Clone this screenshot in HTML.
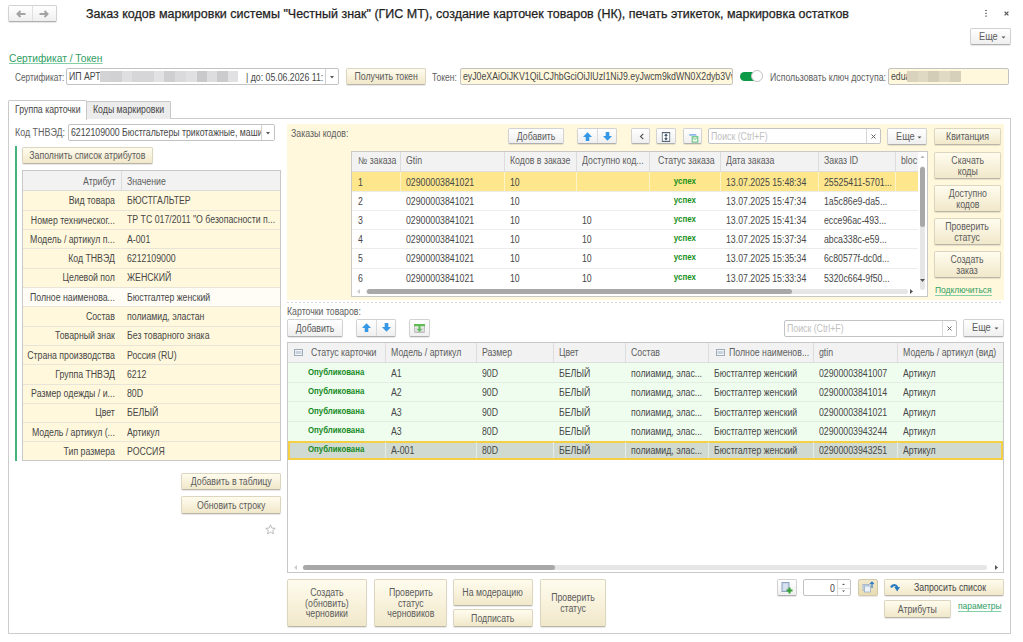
<!DOCTYPE html><html><head><meta charset="utf-8"><style>
*{box-sizing:border-box;margin:0;padding:0}
svg{display:block}
html,body{width:1023px;height:642px;overflow:hidden;background:#fff;font-family:"Liberation Sans",sans-serif;color:#606060}
.a{position:absolute}
.t{position:absolute;font-size:10px;white-space:nowrap;line-height:12px;transform:scaleX(.875);transform-origin:0 50%}
.s{display:inline-block;transform:scaleX(.875);transform-origin:50% 50%;position:relative;top:1px}
.sl{display:inline-block;transform:scaleX(.875);transform-origin:0 50%}
.btn{position:absolute;border:1px solid #d2d2d2;border-bottom-color:#b0b0b0;border-radius:2px;background:linear-gradient(#ffffff,#efefef);box-shadow:0 1px 1px rgba(0,0,0,.10);font-size:10px;color:#5c5c5c;text-align:center;white-space:nowrap;display:flex;align-items:center;justify-content:center;line-height:10.6px}
.yb{border-color:#dcd6c0;border-bottom-color:#b9b5a8;background:linear-gradient(#fffcee,#f1e8ca)}
.inp{position:absolute;border:1px solid #c3c3c3;border-radius:2px;background:#fff;font-size:10px;color:#474747;white-space:nowrap;overflow:hidden;padding-left:2px;line-height:16px}
.link{position:absolute;color:#2f9e63;white-space:nowrap;transform-origin:0 0;transform:scaleX(.92);font-size:9.2px;line-height:9px}
.link span{display:inline-block;border-bottom:1px solid #85cfa6;padding-bottom:0}
.tbl{position:absolute;border:1px solid #c8c8c8;background:#fff;overflow:hidden}
.hd{position:absolute;left:0;top:0;right:0;background:#f2f2f2;border-bottom:1px solid #dedede}
.vl{position:absolute;width:1px;background:#e0e0e0}
.hl{position:absolute;height:1px;background:#ececec}
</style></head><body>
<div class="btn" style="left:8px;top:5px;width:49px;height:17px;"></div>
<div class="a" style="left:32px;top:6px;width:1px;height:15px;background:#e0e0e0"></div>
<svg class="a" style="left:16px;top:10px" width="10" height="8" viewBox="0 0 10 8"><path d="M1.5 4H9.5M4.5 1L1.5 4L4.5 7" stroke="#a3a3a3" stroke-width="2" fill="none"/></svg>
<svg class="a" style="left:39px;top:10px" width="10" height="8" viewBox="0 0 10 8"><path d="M0.5 4H8.5M5.5 1L8.5 4L5.5 7" stroke="#a3a3a3" stroke-width="2" fill="none"/></svg>
<div class="a" style="left:86px;top:6px;font-size:12.5px;line-height:16px;color:#1e1e1e;-webkit-text-stroke:0.25px #1e1e1e;white-space:nowrap">Заказ кодов маркировки системы "Честный знак" (ГИС МТ), создание карточек товаров (НК), печать этикеток, маркировка остатков</div>
<div class="a" style="left:985.2px;top:9.5px;width:1.7px;height:1.7px;background:#707070;box-shadow:0 2.8px 0 #707070,0 5.6px 0 #707070"></div>
<svg class="a" style="left:1003.5px;top:10.5px" width="5" height="5" viewBox="0 0 5 5"><path d="M0.6 0.6L4.4 4.4M4.4 0.6L0.6 4.4" stroke="#5a5a5a" stroke-width="1.3"/></svg>
<div class="btn" style="left:970px;top:28px;width:41px;height:17px;justify-content:flex-start;padding-left:8px;"><span class="sl" style="transform:scaleX(.92);position:relative;top:0.5px">Еще</span><svg width="5" height="3" style="position:absolute;right:4px;top:50%;margin-top:-1px"><path d="M0.5 0.5H4.5L2.5 2.5Z" fill="#555"/></svg></div>
<div class="link" style="left:9px;top:53px;font-size:10.8px;line-height:10px;transform:scaleX(.946)"><span>Сертификат / Токен</span></div>
<div class="t" style="left:15px;top:72px;transform:scaleX(.83)">Сертификат:</div>
<div class="inp" style="left:66px;top:68px;width:273px;height:17px"><span class="sl">ИП АРТ</span></div>
<div class="a" style="left:100px;top:71px;width:10px;height:10.5px;background:#d3d3d5"></div>
<div class="a" style="left:110px;top:71px;width:12px;height:10.5px;background:#d1d1d3"></div>
<div class="a" style="left:122px;top:71px;width:10px;height:10.5px;background:#dfdfe1"></div>
<div class="a" style="left:132px;top:71px;width:22px;height:10.5px;background:#d6d6d8"></div>
<div class="a" style="left:154px;top:71px;width:10px;height:10.5px;background:#e2e2e4"></div>
<div class="a" style="left:164px;top:71px;width:11px;height:10.5px;background:#cfcfd2"></div>
<div class="a" style="left:175px;top:71px;width:11px;height:10.5px;background:#dadadc"></div>
<div class="a" style="left:186px;top:71px;width:11px;height:10.5px;background:#e0e0e2"></div>
<div class="a" style="left:197px;top:71px;width:10px;height:10.5px;background:#c9c9cc"></div>
<div class="a" style="left:207px;top:71px;width:10px;height:10.5px;background:#dddde0"></div>
<div class="a" style="left:217px;top:71px;width:11px;height:10.5px;background:#cbcbce"></div>
<div class="a" style="left:228px;top:71px;width:10px;height:10.5px;background:#e1e1e4"></div>
<div class="t" style="left:246px;top:72px;color:#474747">| до: 05.06.2026 11:</div>
<div class="a" style="left:325px;top:69px;width:1px;height:15px;background:#d0d0d0"></div>
<div class="a" style="left:325px;top:68px;width:14px;height:17px;"></div>
<svg class="a" style="left:329.5px;top:75.5px" width="4" height="3"><path d="M0 0H4L2 2.5Z" fill="#555"/></svg>
<div class="btn yb" style="left:346px;top:68px;width:80px;height:17px;"><span class="s">Получить токен</span></div>
<div class="t" style="left:432px;top:72px;transform:scaleX(.85)">Токен:</div>
<div class="inp" style="left:460px;top:68px;width:273px;height:17px;background:#fff8dc"><span class="sl">eyJ0eXAiOiJKV1QiLCJhbGciOiJIUzI1NiJ9.eyJwcm9kdWN0X2dyb3VwIjoid2Vhcn0</span></div>
<div class="a" style="left:740px;top:72px;width:18px;height:9px;border-radius:4.5px;background:#0c9a47"></div>
<div class="a" style="left:751px;top:70.3px;width:12.2px;height:12.2px;border-radius:50%;background:#fff;border:1px solid #c2c2c2"></div>
<div class="t" style="left:770px;top:72px;">Использовать ключ доступа:</div>
<div class="inp" style="left:888px;top:68px;width:121px;height:17px;background:#fff8dc"><span class="sl">edua</span></div>
<div class="a" style="left:907px;top:71px;width:10.5px;height:10.5px;background:#d9d2bc"></div>
<div class="a" style="left:917.5px;top:71px;width:10.5px;height:10.5px;background:#dfd8c2"></div>
<div class="a" style="left:928px;top:71px;width:11px;height:10.5px;background:#d3ccb6"></div>
<div class="a" style="left:939px;top:71px;width:10.5px;height:10.5px;background:#e0dac5"></div>
<div class="a" style="left:949.5px;top:71px;width:11.5px;height:10.5px;background:#d6cfb9"></div>
<div class="a" style="left:8px;top:118px;width:1003px;height:516px;border:1px solid #cdcdcd;border-radius:0"></div>
<div class="a" style="left:86px;top:101px;width:85px;height:18px;border:1px solid #c8c8c8;border-bottom:none;background:#ececec;border-radius:2px 2px 0 0"></div>
<div class="a" style="left:8px;top:100px;width:79px;height:20px;border:1px solid #c8c8c8;border-bottom:none;background:#fff;border-radius:2px 2px 0 0"></div>
<div class="t" style="left:15px;top:104px;color:#474747">Группа карточки</div>
<div class="t" style="left:93px;top:104px;color:#474747">Коды маркировки</div>
<div class="t" style="left:15px;top:127px;transform:scaleX(.89)">Код ТНВЭД:</div>
<div class="inp" style="left:68px;top:124px;width:207px;height:17px"><span class="sl">6212109000 Бюстгальтеры трикотажные, машинного вязания</span></div>
<div class="a" style="left:261px;top:125px;width:13px;height:15px;background:#fff;border-left:1px solid #d0d0d0"></div>
<svg class="a" style="left:265.5px;top:131.5px" width="4" height="3"><path d="M0 0H4L2 2.5Z" fill="#555"/></svg>
<div class="a" style="left:15px;top:146px;width:2px;height:315px;background:#45b37c"></div>
<div class="btn yb" style="left:22px;top:147px;width:131px;height:17px;"><span class="s">Заполнить список атрибутов</span></div>
<div class="tbl" style="left:22px;top:170px;width:259px;height:291px;background:#fff8dc"></div>
<div class="a" style="left:23px;top:171px;width:257px;height:20px;background:#f2f2f2;border-bottom:1px solid #dcdcdc"></div>
<div class="vl" style="left:121px;top:171px;height:20px;background:#dcdcdc"></div>
<div class="t" style="left:83px;top:175.5px;color:#5e5e5e">Атрибут</div>
<div class="t" style="left:127px;top:175.5px;color:#5e5e5e">Значение</div>
<div class="t" style="left:23px;top:195.2px;width:105px;text-align:right;color:#474747">Вид товара</div>
<div class="t" style="left:127px;top:195.15px;color:#474747">БЮСТГАЛЬТЕР</div>
<div class="hl" style="left:23px;top:209.8px;width:257px;background:#e8e5d8"></div>
<div class="t" style="left:23px;top:214.5px;width:105px;text-align:right;color:#474747">Номер техническог...</div>
<div class="t" style="left:127px;top:214.45000000000002px;color:#474747">ТР ТС 017/2011 "О безопасности п...</div>
<div class="hl" style="left:23px;top:229.1px;width:257px;background:#e8e5d8"></div>
<div class="t" style="left:23px;top:233.8px;width:105px;text-align:right;color:#474747">Модель / артикул п...</div>
<div class="t" style="left:127px;top:233.75px;color:#474747">А-001</div>
<div class="hl" style="left:23px;top:248.4px;width:257px;background:#e8e5d8"></div>
<div class="t" style="left:23px;top:253.1px;width:105px;text-align:right;color:#474747">Код ТНВЭД</div>
<div class="t" style="left:127px;top:253.05px;color:#474747">6212109000</div>
<div class="hl" style="left:23px;top:267.7px;width:257px;background:#e8e5d8"></div>
<div class="t" style="left:23px;top:272.3px;width:105px;text-align:right;color:#474747">Целевой пол</div>
<div class="t" style="left:127px;top:272.34999999999997px;color:#474747">ЖЕНСКИЙ</div>
<div class="a" style="left:23px;top:287.5px;width:257px;height:19.3px;background:#fffdf6"></div>
<div class="hl" style="left:23px;top:287.0px;width:257px;background:#e8e5d8"></div>
<div class="t" style="left:23px;top:291.6px;width:105px;text-align:right;color:#474747">Полное наименова...</div>
<div class="t" style="left:127px;top:291.65px;color:#474747">Бюстгалтер женский</div>
<div class="hl" style="left:23px;top:306.3px;width:257px;background:#e8e5d8"></div>
<div class="t" style="left:23px;top:310.9px;width:105px;text-align:right;color:#474747">Состав</div>
<div class="t" style="left:127px;top:310.95px;color:#474747">полиамид, эластан</div>
<div class="hl" style="left:23px;top:325.6px;width:257px;background:#e8e5d8"></div>
<div class="t" style="left:23px;top:330.2px;width:105px;text-align:right;color:#474747">Товарный знак</div>
<div class="t" style="left:127px;top:330.25px;color:#474747">Без товарного знака</div>
<div class="hl" style="left:23px;top:344.9px;width:257px;background:#e8e5d8"></div>
<div class="t" style="left:23px;top:349.5px;width:105px;text-align:right;color:#474747">Страна производства</div>
<div class="t" style="left:127px;top:349.54999999999995px;color:#474747">Россия (RU)</div>
<div class="hl" style="left:23px;top:364.2px;width:257px;background:#e8e5d8"></div>
<div class="t" style="left:23px;top:368.9px;width:105px;text-align:right;color:#474747">Группа ТНВЭД</div>
<div class="t" style="left:127px;top:368.85px;color:#474747">6212</div>
<div class="hl" style="left:23px;top:383.5px;width:257px;background:#e8e5d8"></div>
<div class="t" style="left:23px;top:388.1px;width:105px;text-align:right;color:#474747">Размер одежды / и...</div>
<div class="t" style="left:127px;top:388.15px;color:#474747">80D</div>
<div class="hl" style="left:23px;top:402.8px;width:257px;background:#e8e5d8"></div>
<div class="t" style="left:23px;top:407.4px;width:105px;text-align:right;color:#474747">Цвет</div>
<div class="t" style="left:127px;top:407.45px;color:#474747">БЕЛЫЙ</div>
<div class="hl" style="left:23px;top:422.1px;width:257px;background:#e8e5d8"></div>
<div class="t" style="left:23px;top:426.8px;width:105px;text-align:right;color:#474747">Модель / артикул (...</div>
<div class="t" style="left:127px;top:426.75px;color:#474747">Артикул</div>
<div class="hl" style="left:23px;top:441.4px;width:257px;background:#e8e5d8"></div>
<div class="t" style="left:23px;top:446.0px;width:105px;text-align:right;color:#474747">Тип размера</div>
<div class="t" style="left:127px;top:446.04999999999995px;color:#474747">РОССИЯ</div>
<div class="btn yb" style="left:181px;top:473px;width:100px;height:17px;"><span class="s">Добавить в таблицу</span></div>
<div class="btn yb" style="left:181px;top:496px;width:100px;height:18px;"><span class="s">Обновить строку</span></div>
<svg class="a" style="left:265px;top:524px" width="11" height="11" viewBox="0 0 11 11"><path d="M5.5 0.8L6.9 4.1L10.3 4.3L7.7 6.5L8.5 9.9L5.5 8.1L2.5 9.9L3.3 6.5L0.7 4.3L4.1 4.1Z" fill="none" stroke="#b5b5b5" stroke-width="0.9"/></svg>
<div class="a" style="left:287px;top:124px;width:717px;height:176px;background:#fff8dc"></div>
<div class="t" style="left:291px;top:128px;">Заказы кодов:</div>
<div class="btn" style="left:508px;top:128px;width:56px;height:16px;"><span class="s">Добавить</span></div>
<div class="btn" style="left:577px;top:128px;width:40px;height:16px;"></div>
<div class="a" style="left:597px;top:129px;width:1px;height:14px;background:#dadada"></div>
<div class="a" style="left:583px;top:131.5px"><svg width="9" height="9" viewBox="0 0 9 9"><path d="M4.5 0.2L9 5H6.3V9H2.7V5H0Z" fill="#3598e6"/></svg></div>
<div class="a" style="left:602.5px;top:131.5px"><svg width="9" height="9" viewBox="0 0 9 9"><path d="M4.5 8.8L9 4H6.3V0H2.7V4H0Z" fill="#3598e6"/></svg></div>
<div class="btn" style="left:631px;top:128px;width:19px;height:16px;"></div>
<svg class="a" style="left:638.5px;top:133px" width="6" height="7" viewBox="0 0 6 7"><path d="M4.3 0.8L1.5 3.5L4.3 6.2" stroke="#505050" stroke-width="1.1" fill="none"/></svg>
<div class="btn" style="left:656px;top:128px;width:20px;height:16px;"><span class="s"><svg width="10" height="10" viewBox="0 0 10 10"><rect x="0.6" y="0.6" width="8.8" height="8.8" fill="#fff" stroke="#56687a" stroke-width="1.2"/><path d="M5 1.6L7.2 3.8H2.8ZM5 8.4L7.2 6.2H2.8Z" fill="#34495e"/><path d="M5 3V7" stroke="#34495e" stroke-width="0.9"/></svg></span></div>
<div class="btn" style="left:683px;top:128px;width:19px;height:16px"></div>
<svg class="a" style="left:689px;top:133.5px" width="10" height="9" viewBox="0 0 10 9"><rect x="0" y="0" width="7.5" height="1.8" rx="0.9" fill="#8fb8ea"/><rect x="3.2" y="2.7" width="5.6" height="5.4" fill="#f0faf2" stroke="#5cbf76" stroke-width="1"/><path d="M3.6 3.3L6 5.5L8.4 3.3" stroke="#5cbf76" fill="none" stroke-width="0.9"/></svg>
<div class="inp" style="left:708px;top:128px;width:173px;height:16px;color:#c0c0c0"><span class="sl">Поиск (Ctrl+F)</span></div>
<div class="a" style="left:866px;top:129px;width:1px;height:14px;background:#d8d8d8"></div>
<svg class="a" style="left:871px;top:134px" width="5" height="5"><path d="M0.5 0.5L4.5 4.5M4.5 0.5L0.5 4.5" stroke="#666" stroke-width="1"/></svg>
<div class="btn" style="left:887px;top:128px;width:40px;height:17px;justify-content:flex-start;padding-left:8px;"><span class="sl" style="transform:scaleX(.92);position:relative;top:0.5px">Еще</span><svg width="5" height="3" style="position:absolute;right:4px;top:50%;margin-top:-1px"><path d="M0.5 0.5H4.5L2.5 2.5Z" fill="#555"/></svg></div>
<div class="btn yb" style="left:934px;top:128px;width:67px;height:17px;"><span class="s">Квитанция</span></div>
<div class="btn yb" style="left:934px;top:152px;width:67px;height:27px;"><span class="s">Скачать<br>коды</span></div>
<div class="btn yb" style="left:934px;top:185px;width:67px;height:27px;"><span class="s">Доступно<br>кодов</span></div>
<div class="btn yb" style="left:934px;top:218px;width:67px;height:27px;"><span class="s">Проверить<br>статус</span></div>
<div class="btn yb" style="left:934px;top:251px;width:67px;height:27px;"><span class="s">Создать<br>заказ</span></div>
<div class="link" style="left:935px;top:286px"><span>Подключиться</span></div>
<div class="tbl" style="left:351px;top:151px;width:577px;height:146px"></div>
<div class="a" style="left:352px;top:152px;width:566px;height:20px;background:#f2f2f2;border-bottom:1px solid #dedede"></div>
<div class="vl" style="left:400px;top:152px;height:20px;background:#dcdcdc"></div>
<div class="vl" style="left:504px;top:152px;height:20px;background:#dcdcdc"></div>
<div class="vl" style="left:576px;top:152px;height:20px;background:#dcdcdc"></div>
<div class="vl" style="left:649px;top:152px;height:20px;background:#dcdcdc"></div>
<div class="vl" style="left:720px;top:152px;height:20px;background:#dcdcdc"></div>
<div class="vl" style="left:818px;top:152px;height:20px;background:#dcdcdc"></div>
<div class="vl" style="left:895px;top:152px;height:20px;background:#dcdcdc"></div>
<div class="t" style="left:358px;top:155.2px;color:#5e5e5e">№ заказа</div>
<div class="t" style="left:406px;top:155.2px;color:#5e5e5e">Gtin</div>
<div class="t" style="left:510px;top:155.2px;color:#5e5e5e">Кодов в заказе</div>
<div class="t" style="left:582px;top:155.2px;color:#5e5e5e">Доступно код...</div>
<div class="t" style="left:658px;top:155.2px;color:#5e5e5e">Статус заказа</div>
<div class="t" style="left:726px;top:155.2px;color:#5e5e5e">Дата заказа</div>
<div class="t" style="left:824px;top:155.2px;color:#5e5e5e">Заказ ID</div>
<div class="t" style="left:901px;top:155.2px;color:#5e5e5e">bloc</div>
<div class="a" style="left:352px;top:172.0px;width:566px;height:19.2px;background:#fde68c"></div>
<div class="vl" style="left:400px;top:172.0px;height:19.2px;background:#fff3c8"></div>
<div class="vl" style="left:504px;top:172.0px;height:19.2px;background:#fff3c8"></div>
<div class="vl" style="left:576px;top:172.0px;height:19.2px;background:#fff3c8"></div>
<div class="vl" style="left:649px;top:172.0px;height:19.2px;background:#fff3c8"></div>
<div class="vl" style="left:720px;top:172.0px;height:19.2px;background:#fff3c8"></div>
<div class="vl" style="left:818px;top:172.0px;height:19.2px;background:#fff3c8"></div>
<div class="vl" style="left:895px;top:172.0px;height:19.2px;background:#fff3c8"></div>
<div class="t" style="left:358px;top:176.6px;color:#474747">1</div>
<div class="t" style="left:406px;top:176.6px;color:#474747">02900003841021</div>
<div class="t" style="left:510px;top:176.6px;color:#474747">10</div>
<div class="t" style="left:582px;top:176.6px;color:#474747"></div>
<div class="a" style="left:650px;top:175.6px;width:70px;text-align:center;font-size:8.5px;font-weight:bold;color:#16901a;line-height:11px"><span class="s" style="transform:scaleX(.93);top:0">успех</span></div>
<div class="t" style="left:726px;top:176.6px;color:#474747">13.07.2025 15:48:34</div>
<div class="t" style="left:824px;top:176.6px;color:#474747">25525411-5701...</div>
<div class="hl" style="left:352px;top:190.7px;width:566px;background:#ececec"></div>
<div class="t" style="left:358px;top:195.79999999999998px;color:#474747">2</div>
<div class="t" style="left:406px;top:195.79999999999998px;color:#474747">02900003841021</div>
<div class="t" style="left:510px;top:195.79999999999998px;color:#474747">10</div>
<div class="t" style="left:582px;top:195.79999999999998px;color:#474747"></div>
<div class="a" style="left:650px;top:194.8px;width:70px;text-align:center;font-size:8.5px;font-weight:bold;color:#16901a;line-height:11px"><span class="s" style="transform:scaleX(.93);top:0">успех</span></div>
<div class="t" style="left:726px;top:195.79999999999998px;color:#474747">13.07.2025 15:47:34</div>
<div class="t" style="left:824px;top:195.79999999999998px;color:#474747">1a5c86e9-da5...</div>
<div class="hl" style="left:352px;top:209.9px;width:566px;background:#ececec"></div>
<div class="t" style="left:358px;top:215.0px;color:#474747">3</div>
<div class="t" style="left:406px;top:215.0px;color:#474747">02900003841021</div>
<div class="t" style="left:510px;top:215.0px;color:#474747">10</div>
<div class="t" style="left:582px;top:215.0px;color:#474747">10</div>
<div class="a" style="left:650px;top:214.0px;width:70px;text-align:center;font-size:8.5px;font-weight:bold;color:#16901a;line-height:11px"><span class="s" style="transform:scaleX(.93);top:0">успех</span></div>
<div class="t" style="left:726px;top:215.0px;color:#474747">13.07.2025 15:41:34</div>
<div class="t" style="left:824px;top:215.0px;color:#474747">ecce96ac-493...</div>
<div class="hl" style="left:352px;top:229.1px;width:566px;background:#ececec"></div>
<div class="t" style="left:358px;top:234.2px;color:#474747">4</div>
<div class="t" style="left:406px;top:234.2px;color:#474747">02900003841021</div>
<div class="t" style="left:510px;top:234.2px;color:#474747">10</div>
<div class="t" style="left:582px;top:234.2px;color:#474747">10</div>
<div class="a" style="left:650px;top:233.2px;width:70px;text-align:center;font-size:8.5px;font-weight:bold;color:#16901a;line-height:11px"><span class="s" style="transform:scaleX(.93);top:0">успех</span></div>
<div class="t" style="left:726px;top:234.2px;color:#474747">13.07.2025 15:37:34</div>
<div class="t" style="left:824px;top:234.2px;color:#474747">abca338c-e59...</div>
<div class="hl" style="left:352px;top:248.3px;width:566px;background:#ececec"></div>
<div class="t" style="left:358px;top:253.40000000000003px;color:#474747">5</div>
<div class="t" style="left:406px;top:253.40000000000003px;color:#474747">02900003841021</div>
<div class="t" style="left:510px;top:253.40000000000003px;color:#474747">10</div>
<div class="t" style="left:582px;top:253.40000000000003px;color:#474747">10</div>
<div class="a" style="left:650px;top:252.4px;width:70px;text-align:center;font-size:8.5px;font-weight:bold;color:#16901a;line-height:11px"><span class="s" style="transform:scaleX(.93);top:0">успех</span></div>
<div class="t" style="left:726px;top:253.40000000000003px;color:#474747">13.07.2025 15:35:34</div>
<div class="t" style="left:824px;top:253.40000000000003px;color:#474747">6c80577f-dc0d...</div>
<div class="hl" style="left:352px;top:267.5px;width:566px;background:#ececec"></div>
<div class="t" style="left:358px;top:272.6px;color:#474747">6</div>
<div class="t" style="left:406px;top:272.6px;color:#474747">02900003841021</div>
<div class="t" style="left:510px;top:272.6px;color:#474747">10</div>
<div class="t" style="left:582px;top:272.6px;color:#474747">10</div>
<div class="a" style="left:650px;top:271.6px;width:70px;text-align:center;font-size:8.5px;font-weight:bold;color:#16901a;line-height:11px"><span class="s" style="transform:scaleX(.93);top:0">успех</span></div>
<div class="t" style="left:726px;top:272.6px;color:#474747">13.07.2025 15:33:34</div>
<div class="t" style="left:824px;top:272.6px;color:#474747">5320c664-9f50...</div>
<div class="a" style="left:918px;top:152px;width:9px;height:144px;background:#fff"></div>
<div class="a" style="left:920px;top:166px;width:5px;height:124px;border-radius:3px;background:#e6e6e6"></div>
<div class="a" style="left:920px;top:167px;width:5px;height:60px;border-radius:3px;background:#a8a8a8"></div>
<svg class="a" style="left:920px;top:155px" width="5" height="3"><path d="M0.5 3H4.5L2.5 0.5Z" fill="#b5b5b5"/></svg>
<svg class="a" style="left:920px;top:279px" width="5" height="3"><path d="M0 0H5L2.5 3Z" fill="#555"/></svg>
<div class="a" style="left:352px;top:286px;width:566px;height:10px;background:#fff"></div>
<div class="a" style="left:366px;top:289px;width:542px;height:5px;border-radius:3px;background:#e6e6e6"></div>
<div class="a" style="left:367px;top:289px;width:425px;height:5px;border-radius:3px;background:#a8a8a8"></div>
<svg class="a" style="left:357px;top:289px" width="3" height="5"><path d="M3 0V5L0 2.5Z" fill="#ccc"/></svg>
<svg class="a" style="left:910px;top:289px" width="3" height="5"><path d="M0 0V5L3 2.5Z" fill="#555"/></svg>
<div class="a" style="left:287px;top:302px;width:716px;height:1px;background:repeating-linear-gradient(90deg,#d6d6d6 0 2px,transparent 2px 4px)"></div>
<div class="t" style="left:287px;top:306px;">Карточки товаров:</div>
<div class="btn" style="left:287px;top:319px;width:56px;height:18px;"><span class="s">Добавить</span></div>
<div class="btn" style="left:356px;top:319px;width:40px;height:18px;"></div>
<div class="a" style="left:376px;top:320px;width:1px;height:16px;background:#dadada"></div>
<div class="a" style="left:362px;top:323px"><svg width="9" height="9" viewBox="0 0 9 9"><path d="M4.5 0.2L9 5H6.3V9H2.7V5H0Z" fill="#3598e6"/></svg></div>
<div class="a" style="left:382px;top:323px"><svg width="9" height="9" viewBox="0 0 9 9"><path d="M4.5 8.8L9 4H6.3V0H2.7V4H0Z" fill="#3598e6"/></svg></div>
<div class="btn" style="left:409px;top:319px;width:21px;height:18px;"></div>
<svg class="a" style="left:414px;top:324px" width="11" height="9" viewBox="0 0 11 9"><rect x="0.4" y="0.4" width="10.2" height="8.2" rx="0.8" fill="#f6f6f6" stroke="#a9a9a9" stroke-width="0.8"/><rect x="0" y="0" width="11" height="2.3" fill="#62bb52"/><path d="M1 4.2H10M1 5.9H10M1 7.5H10" stroke="#bdbdbd" stroke-width="0.7"/><path d="M5.5 2V5.5" stroke="#5db85a" stroke-width="2"/><path d="M2.8 5L8.2 5L5.5 8Z" fill="#5db85a"/></svg>
<div class="inp" style="left:784px;top:320px;width:173px;height:17px;color:#c0c0c0"><span class="sl">Поиск (Ctrl+F)</span></div>
<div class="a" style="left:942px;top:321px;width:1px;height:15px;background:#d8d8d8"></div>
<svg class="a" style="left:947px;top:326px" width="5" height="5"><path d="M0.5 0.5L4.5 4.5M4.5 0.5L0.5 4.5" stroke="#666" stroke-width="1"/></svg>
<div class="btn" style="left:963px;top:319px;width:41px;height:18px;justify-content:flex-start;padding-left:8px;"><span class="sl" style="transform:scaleX(.92);position:relative;top:0.5px">Еще</span><svg width="5" height="3" style="position:absolute;right:4px;top:50%;margin-top:-1px"><path d="M0.5 0.5H4.5L2.5 2.5Z" fill="#555"/></svg></div>
<div class="tbl" style="left:287px;top:342px;width:717px;height:231px"></div>
<div class="a" style="left:288px;top:343px;width:715px;height:20px;background:#f2f2f2;border-bottom:1px solid #dedede"></div>
<div class="vl" style="left:385px;top:343px;height:20px;background:#dcdcdc"></div>
<div class="vl" style="left:476px;top:343px;height:20px;background:#dcdcdc"></div>
<div class="vl" style="left:553px;top:343px;height:20px;background:#dcdcdc"></div>
<div class="vl" style="left:625px;top:343px;height:20px;background:#dcdcdc"></div>
<div class="vl" style="left:708px;top:343px;height:20px;background:#dcdcdc"></div>
<div class="vl" style="left:813px;top:343px;height:20px;background:#dcdcdc"></div>
<div class="vl" style="left:897px;top:343px;height:20px;background:#dcdcdc"></div>
<div class="a" style="left:294px;top:349px"><svg width="9" height="7" viewBox="0 0 9 7"><rect x="0.5" y="0.5" width="8" height="6" fill="#f4f6f9" stroke="#9eabb9"/><rect x="1.5" y="2" width="6" height="3" fill="#c9d3de"/></svg></div>
<div class="a" style="left:716px;top:349px"><svg width="9" height="7" viewBox="0 0 9 7"><rect x="0.5" y="0.5" width="8" height="6" fill="#f4f6f9" stroke="#9eabb9"/><rect x="1.5" y="2" width="6" height="3" fill="#c9d3de"/></svg></div>
<div class="t" style="left:311px;top:347.2px;color:#5e5e5e">Статус карточки</div>
<div class="t" style="left:391px;top:347.2px;color:#5e5e5e">Модель / артикул</div>
<div class="t" style="left:482px;top:347.2px;color:#5e5e5e">Размер</div>
<div class="t" style="left:559px;top:347.2px;color:#5e5e5e">Цвет</div>
<div class="t" style="left:631px;top:347.2px;color:#5e5e5e">Состав</div>
<div class="t" style="left:729px;top:347.2px;color:#5e5e5e">Полное наименов...</div>
<div class="t" style="left:819px;top:347.2px;color:#5e5e5e">gtin</div>
<div class="t" style="left:903px;top:347.2px;color:#5e5e5e">Модель / артикул (вид)</div>
<div class="a" style="left:288px;top:363.0px;width:715px;height:19.4px;background:#effdef"></div>
<div class="a" style="left:308px;top:366.7px;font-size:8.5px;font-weight:bold;color:#178a1f;line-height:11px;white-space:nowrap"><span class="sl" style="transform:scaleX(.92)">Опубликована</span></div>
<div class="t" style="left:391px;top:367.7px;color:#474747">A1</div>
<div class="t" style="left:482px;top:367.7px;color:#474747">90D</div>
<div class="t" style="left:559px;top:367.7px;color:#474747">БЕЛЫЙ</div>
<div class="t" style="left:631px;top:367.7px;color:#474747">полиамид, элас...</div>
<div class="t" style="left:714px;top:367.7px;color:#474747">Бюстгалтер женский</div>
<div class="t" style="left:819px;top:367.7px;color:#474747">02900003841007</div>
<div class="t" style="left:903px;top:367.7px;color:#474747">Артикул</div>
<div class="a" style="left:288px;top:382.4px;width:715px;height:19.4px;background:#effdef"></div>
<div class="hl" style="left:288px;top:381.9px;width:715px;background:#e3eee3"></div>
<div class="a" style="left:308px;top:386.1px;font-size:8.5px;font-weight:bold;color:#178a1f;line-height:11px;white-space:nowrap"><span class="sl" style="transform:scaleX(.92)">Опубликована</span></div>
<div class="t" style="left:391px;top:387.09999999999997px;color:#474747">A2</div>
<div class="t" style="left:482px;top:387.09999999999997px;color:#474747">90D</div>
<div class="t" style="left:559px;top:387.09999999999997px;color:#474747">БЕЛЫЙ</div>
<div class="t" style="left:631px;top:387.09999999999997px;color:#474747">полиамид, элас...</div>
<div class="t" style="left:714px;top:387.09999999999997px;color:#474747">Бюстгалтер женский</div>
<div class="t" style="left:819px;top:387.09999999999997px;color:#474747">02900003841014</div>
<div class="t" style="left:903px;top:387.09999999999997px;color:#474747">Артикул</div>
<div class="a" style="left:288px;top:401.8px;width:715px;height:19.4px;background:#effdef"></div>
<div class="hl" style="left:288px;top:401.3px;width:715px;background:#e3eee3"></div>
<div class="a" style="left:308px;top:405.5px;font-size:8.5px;font-weight:bold;color:#178a1f;line-height:11px;white-space:nowrap"><span class="sl" style="transform:scaleX(.92)">Опубликована</span></div>
<div class="t" style="left:391px;top:406.5px;color:#474747">A3</div>
<div class="t" style="left:482px;top:406.5px;color:#474747">90D</div>
<div class="t" style="left:559px;top:406.5px;color:#474747">БЕЛЫЙ</div>
<div class="t" style="left:631px;top:406.5px;color:#474747">полиамид, элас...</div>
<div class="t" style="left:714px;top:406.5px;color:#474747">Бюстгалтер женский</div>
<div class="t" style="left:819px;top:406.5px;color:#474747">02900003841021</div>
<div class="t" style="left:903px;top:406.5px;color:#474747">Артикул</div>
<div class="a" style="left:288px;top:421.2px;width:715px;height:19.4px;background:#effdef"></div>
<div class="hl" style="left:288px;top:420.7px;width:715px;background:#e3eee3"></div>
<div class="a" style="left:308px;top:424.9px;font-size:8.5px;font-weight:bold;color:#178a1f;line-height:11px;white-space:nowrap"><span class="sl" style="transform:scaleX(.92)">Опубликована</span></div>
<div class="t" style="left:391px;top:425.9px;color:#474747">A3</div>
<div class="t" style="left:482px;top:425.9px;color:#474747">80D</div>
<div class="t" style="left:559px;top:425.9px;color:#474747">БЕЛЫЙ</div>
<div class="t" style="left:631px;top:425.9px;color:#474747">полиамид, элас...</div>
<div class="t" style="left:714px;top:425.9px;color:#474747">Бюстгалтер женский</div>
<div class="t" style="left:819px;top:425.9px;color:#474747">02900003943244</div>
<div class="t" style="left:903px;top:425.9px;color:#474747">Артикул</div>
<div class="a" style="left:288px;top:441px;width:715px;height:18.5px;background:#d0dad0;border:2px solid #f6d044"></div>
<div class="vl" style="left:385px;top:441.6px;height:16.4px;background:#e6ece6"></div>
<div class="vl" style="left:476px;top:441.6px;height:16.4px;background:#e6ece6"></div>
<div class="vl" style="left:553px;top:441.6px;height:16.4px;background:#e6ece6"></div>
<div class="vl" style="left:625px;top:441.6px;height:16.4px;background:#e6ece6"></div>
<div class="vl" style="left:708px;top:441.6px;height:16.4px;background:#e6ece6"></div>
<div class="vl" style="left:813px;top:441.6px;height:16.4px;background:#e6ece6"></div>
<div class="vl" style="left:897px;top:441.6px;height:16.4px;background:#e6ece6"></div>
<div class="a" style="left:308px;top:444.3px;font-size:8.5px;font-weight:bold;color:#178a1f;line-height:11px;white-space:nowrap"><span class="sl" style="transform:scaleX(.92)">Опубликована</span></div>
<div class="t" style="left:391px;top:445.3px;color:#474747">А-001</div>
<div class="t" style="left:482px;top:445.3px;color:#474747">80D</div>
<div class="t" style="left:559px;top:445.3px;color:#474747">БЕЛЫЙ</div>
<div class="t" style="left:631px;top:445.3px;color:#474747">полиамид, элас...</div>
<div class="t" style="left:714px;top:445.3px;color:#474747">Бюстгалтер женский</div>
<div class="t" style="left:819px;top:445.3px;color:#474747">02900003943251</div>
<div class="t" style="left:903px;top:445.3px;color:#474747">Артикул</div>
<div class="a" style="left:303px;top:565px;width:684px;height:5px;border-radius:3px;background:#e6e6e6"></div>
<div class="a" style="left:303px;top:565px;width:252px;height:5px;border-radius:3px;background:#a8a8a8"></div>
<svg class="a" style="left:294px;top:565px" width="3" height="5"><path d="M3 0V5L0 2.5Z" fill="#ccc"/></svg>
<svg class="a" style="left:995px;top:565px" width="3" height="5"><path d="M0 0V5L3 2.5Z" fill="#555"/></svg>
<div class="btn yb" style="left:287px;top:579px;width:80px;height:48px;"><span class="s">Создать<br>(обновить)<br>черновики</span></div>
<div class="btn yb" style="left:374px;top:579px;width:73px;height:48px;"><span class="s">Проверить<br>статус<br>черновиков</span></div>
<div class="btn yb" style="left:453px;top:579px;width:80px;height:27px;"><span class="s">На модерацию</span></div>
<div class="btn yb" style="left:453px;top:609px;width:80px;height:18px;"><span class="s">Подписать</span></div>
<div class="btn yb" style="left:540px;top:579px;width:66px;height:48px;"><span class="s">Проверить<br>статус</span></div>
<div class="btn" style="left:777px;top:579px;width:20px;height:17px;"></div>
<svg class="a" style="left:781px;top:582px" width="12" height="12" viewBox="0 0 12 12"><rect x="1" y="0.5" width="7" height="9" fill="#c9d6e6" stroke="#8ea6c4" stroke-width="1"/><path d="M2.5 3H6.5M2.5 5H6.5M2.5 7H5" stroke="#f4f7fb" stroke-width="0.8"/><path d="M8.5 5.5V11.5M5.5 8.5H11.5" stroke="#35a035" stroke-width="2"/></svg>
<div class="inp" style="left:803px;top:579px;width:48px;height:17px"></div>
<div class="t" style="left:829.5px;top:583px;color:#444">0</div>
<div class="a" style="left:836.5px;top:580px;width:1px;height:15px;background:#d8d8d8"></div><div class="a" style="left:837px;top:587.5px;width:13px;height:1px;background:#e0e0e0"></div>
<svg class="a" style="left:842px;top:583px" width="3" height="10"><path d="M0 2H3L1.5 0.5Z M0 7.5H3L1.5 9Z" fill="#555"/></svg>
<div class="btn yb" style="left:858px;top:579px;width:20px;height:17px;background:linear-gradient(#f1e9cc,#e8dcb2);border-color:#d3c9a8"></div>
<svg class="a" style="left:862px;top:581px" width="12" height="12" viewBox="0 0 12 12"><rect x="1" y="3.5" width="6" height="6" fill="#d5e0ee" stroke="#9aaec8" stroke-width="0.8"/><rect x="2.5" y="5" width="6" height="6" fill="#eef3f9" stroke="#9aaec8" stroke-width="0.8"/><path d="M10 1V7M8 3L10 1L12 3" stroke="#2f78c4" stroke-width="1.2" fill="none"/></svg>
<div class="btn yb" style="left:884px;top:579px;width:120px;height:17px;"></div>
<div class="t" style="left:913.5px;top:582px;color:#474747">Запросить список</div>
<svg class="a" style="left:889.5px;top:583px" width="10" height="9" viewBox="0 0 10 9"><path d="M1 4.5C2.5 1.3 6 1.3 7.2 4.2" stroke="#2a7bbd" stroke-width="2.2" fill="none"/><path d="M4.3 4L10 4L7.2 8.5Z" fill="#2a7bbd"/></svg>
<div class="btn yb" style="left:884px;top:600px;width:67px;height:18px;"><span class="s">Атрибуты</span></div>
<div class="link" style="left:958px;top:602px"><span>параметры</span></div>
</body></html>
